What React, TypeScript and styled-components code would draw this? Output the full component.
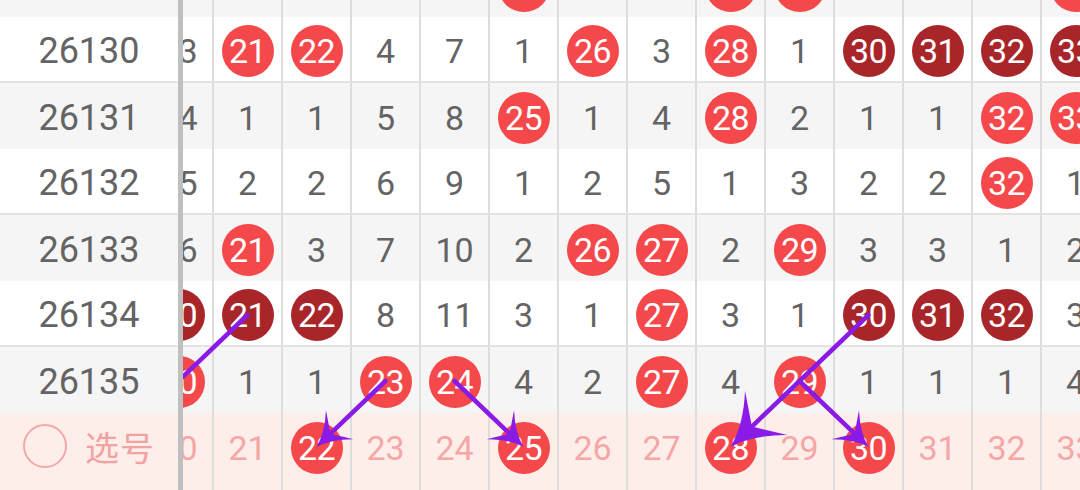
import React, { useLayoutEffect, useRef } from 'react';
import styled, { createGlobalStyle, css } from 'styled-components';

const COL_W = 69;
const ROW_H = 66;
const FIRST_NO = 20;
const SCROLL_X = 38;
const SCROLL_Y = 49;

type Tone = 'white' | 'gray' | 'pick';

type ChartRow = {
  period?: string;
  tone: Tone;
  cells: string[];
};

// b = 开奖号, d = 连号, p = 选号行的号码
const rows: ChartRow[] = [
  { period: '26129', tone: 'gray', cells: ['12', '5', '3', '3', '6', 'b25', '2', '2', 'b28', 'b29', '4', '2', '6', 'b33'] },
  { period: '26130', tone: 'white', cells: ['13', 'b21', 'b22', '4', '7', '1', 'b26', '3', 'b28', '1', 'd30', 'd31', 'd32', 'd33'] },
  { period: '26131', tone: 'gray', cells: ['14', '1', '1', '5', '8', 'b25', '1', '4', 'b28', '2', '1', '1', 'b32', 'b33'] },
  { period: '26132', tone: 'white', cells: ['15', '2', '2', '6', '9', '1', '2', '5', '1', '3', '2', '2', 'b32', '1'] },
  { period: '26133', tone: 'gray', cells: ['16', 'b21', '3', '7', '10', '2', 'b26', 'b27', '2', 'b29', '3', '3', '1', '2'] },
  { period: '26134', tone: 'white', cells: ['d20', 'd21', 'd22', '8', '11', '3', '1', 'b27', '3', '1', 'd30', 'd31', 'd32', '3'] },
  { period: '26135', tone: 'gray', cells: ['b20', '1', '1', 'b23', 'b24', '4', '2', 'b27', '4', 'b29', '1', '1', '1', '4'] },
  { tone: 'pick', cells: ['p20', 'p21', 'b22', 'p23', 'p24', 'b25', 'p26', 'p27', 'b28', 'p29', 'b30', 'p31', 'p32', 'p33'] },
  { tone: 'pick', cells: Array(14).fill('') },
];

// [fromRow, fromNo, toRow, toNo, withHead]
const links: [number, number, number, number, boolean][] = [
  [5, 21, 6, 20, false],
  [6, 23, 7, 22, true],
  [6, 24, 7, 25, true],
  [5, 30, 7, 28, true],
  [6, 29, 7, 30, true],
];

const GlobalStyle = createGlobalStyle`
  html, body {
    margin: 0;
    padding: 0;
    background: #ffffff;
  }
  body {
    width: 1080px;
    height: 490px;
    overflow: hidden;
    font-family: Roboto, "Noto Sans", "Noto Sans CJK SC", sans-serif;
  }
`;

const Screen = styled.div`
  display: flex;
  width: 1080px;
  height: 490px;
  overflow: hidden;
`;

const PeriodPane = styled.div`
  flex: 0 0 178px;
  height: 100%;
  overflow: hidden;
  border-right: 5px solid #bfbfbf;
`;

const ChartPane = styled.div`
  flex: 1;
  height: 100%;
  overflow: hidden;
`;

const Chart = styled.div`
  position: relative;
  width: ${14 * COL_W}px;
`;

const rowBg: Record<Tone, string> = {
  white: '#ffffff',
  gray: '#f5f5f5',
  pick: '#fdeeea',
};

const Row = styled.div<{ $tone: Tone }>`
  display: flex;
  height: ${ROW_H}px;
  box-sizing: border-box;
  background: ${(p) => rowBg[p.$tone]};
  ${(p) =>
    p.$tone === 'white' &&
    css`
      border-bottom: 2px solid #e3e3e3;
    `}
`;

const PeriodRow = styled(Row)`
  align-items: center;
  justify-content: center;
  padding-top: 4px;
  font-size: 36px;
  color: #646464;
`;

const PickRow = styled(Row)`
  align-items: center;
  gap: 18px;
  padding-left: 23px;
`;

const PickCircle = styled.span`
  width: 44px;
  height: 44px;
  box-sizing: border-box;
  border: 2px solid #f4a7a7;
  border-radius: 50%;
`;

const PickLabel = styled.span`
  font-family: "Noto Sans CJK SC", "Noto Sans", sans-serif;
  font-size: 34px;
  color: #f2a2a2;
  letter-spacing: 1px;
`;

const Cell = styled.div<{ $pick?: boolean }>`
  flex: 0 0 ${COL_W}px;
  box-sizing: border-box;
  border-right: 2px solid #dddddd;
  padding-top: 3px;
  display: flex;
  align-items: center;
  justify-content: center;
  font-size: 34px;
  color: ${(p) => (p.$pick ? '#f5a6a6' : '#646464')};
`;

const Ball = styled.span<{ $dark?: boolean }>`
  width: 52px;
  height: 52px;
  border-radius: 50%;
  display: flex;
  align-items: center;
  justify-content: center;
  background: ${(p) => (p.$dark ? '#a8262a' : '#f5484b')};
  color: #ffffff;
  font-size: 34px;
  letter-spacing: -0.5px;
`;

const ArrowLayer = styled.svg`
  position: absolute;
  left: 0;
  top: 0;
  width: 100%;
  height: 100%;
  pointer-events: none;
`;

function center(row: number, no: number) {
  return [(no - FIRST_NO) * COL_W + (COL_W - 2) / 2, row * ROW_H + ROW_H / 2 + 1];
}

function Arrow({ from, to, withHead }: { from: number[]; to: number[]; withHead: boolean }) {
  const [x1, y1] = from;
  const [x2, y2] = to;
  const len = Math.hypot(x2 - x1, y2 - y1);
  const ux = (x2 - x1) / len;
  const uy = (y2 - y1) / len;
  const px = -uy;
  const py = ux;
  const back = 15 + len * 0.18;
  const half = back * 0.62;
  const notch = back * 0.6;
  const bx = x2 - ux * back;
  const by = y2 - uy * back;
  const lx = bx + px * half;
  const ly = by + py * half;
  const rx = bx - px * half;
  const ry = by - py * half;
  const nx = x2 - ux * notch;
  const ny = y2 - uy * notch;
  const cx = x2 - ux * back * 0.5;
  const cy = y2 - uy * back * 0.5;
  const head = [
    `M${x2} ${y2}`,
    `Q${cx + px * half * 0.22} ${cy + py * half * 0.22} ${lx} ${ly}`,
    `L${nx} ${ny}`,
    `L${rx} ${ry}`,
    `Q${cx - px * half * 0.22} ${cy - py * half * 0.22} ${x2} ${y2}`,
    'Z',
  ].join(' ');

  return (
    <g>
      <line
        x1={x1}
        y1={y1}
        x2={withHead ? nx : x2}
        y2={withHead ? ny : y2}
        stroke="#8a1be6"
        strokeWidth={4.5}
        strokeLinecap="round"
      />
      {withHead && <path d={head} fill="#8a1be6" />}
    </g>
  );
}

function renderCell(value: string, i: number) {
  const kind = value.charAt(0);
  const num = value.replace(/^[bdp]/, '');
  return (
    <Cell key={i} $pick={kind === 'p'}>
      {kind === 'b' || kind === 'd' ? <Ball $dark={kind === 'd'}>{num}</Ball> : num}
    </Cell>
  );
}

export default function App() {
  const periodRef = useRef<HTMLDivElement>(null);
  const chartRef = useRef<HTMLDivElement>(null);

  useLayoutEffect(() => {
    if (periodRef.current) periodRef.current.scrollTop = SCROLL_Y;
    if (chartRef.current) {
      chartRef.current.scrollTop = SCROLL_Y;
      chartRef.current.scrollLeft = SCROLL_X;
    }
  }, []);

  return (
    <>
      <GlobalStyle />
      <Screen>
        <PeriodPane ref={periodRef}>
          {rows.map((row, r) =>
            row.tone === 'pick' ? (
              <PickRow key={r} $tone="pick">
                {r === 7 && (
                  <>
                    <PickCircle />
                    <PickLabel>选号</PickLabel>
                  </>
                )}
              </PickRow>
            ) : (
              <PeriodRow key={r} $tone={row.tone}>
                {row.period}
              </PeriodRow>
            )
          )}
        </PeriodPane>

        <ChartPane ref={chartRef}>
          <Chart>
            {rows.map((row, r) => (
              <Row key={r} $tone={row.tone}>
                {row.cells.map(renderCell)}
              </Row>
            ))}
            <ArrowLayer>
              {links.map(([r1, n1, r2, n2, withHead], i) => (
                <Arrow key={i} from={center(r1, n1)} to={center(r2, n2)} withHead={withHead} />
              ))}
            </ArrowLayer>
          </Chart>
        </ChartPane>
      </Screen>
    </>
  );
}
